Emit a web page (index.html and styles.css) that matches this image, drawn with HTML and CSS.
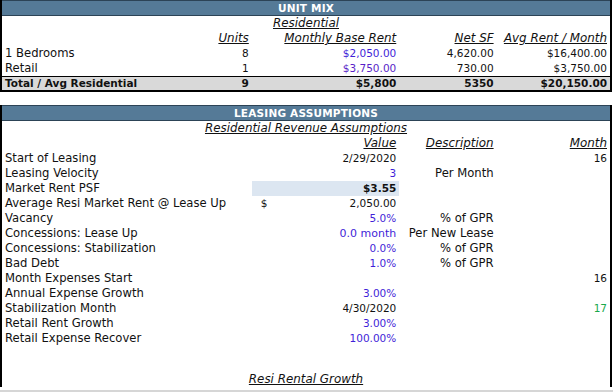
FILE: index.html
```html
<!DOCTYPE html>
<html>
<head>
<meta charset="utf-8">
<link rel="stylesheet" href="styles.css">
</head>
<body>
<div class="sheet">
  <table class="grid unit-mix">
    <colgroup>
      <col class="c-label"><col class="c-units"><col class="c-rent"><col class="c-sf"><col class="c-avg">
    </colgroup>
    <tr class="band"><td colspan="5">UNIT MIX</td></tr>
    <tr><td colspan="5" class="center"><span class="sub">Residential</span></td></tr>
    <tr>
      <td></td>
      <td class="r"><span class="sub">Units</span></td>
      <td class="r"><span class="sub">Monthly Base Rent</span></td>
      <td class="r"><span class="sub">Net SF</span></td>
      <td class="r"><span class="sub">Avg Rent / Month</span></td>
    </tr>
    <tr>
      <td>1 Bedrooms</td><td class="r num">8</td><td class="r num input">$2,050.00</td><td class="r num">4,620.00</td><td class="r num">$16,400.00</td>
    </tr>
    <tr>
      <td>Retail</td><td class="r num">1</td><td class="r num input2">$3,750.00</td><td class="r num">730.00</td><td class="r num">$3,750.00</td>
    </tr>
    <tr class="total">
      <td>Total / Avg Residential</td><td class="r">9</td><td class="r">$5,800</td><td class="r">5350</td><td class="r">$20,150.00</td>
    </tr>
  </table>

  <table class="grid leasing">
    <colgroup>
      <col class="l-label"><col class="l-value"><col class="l-desc"><col class="l-month">
    </colgroup>
    <tr class="band"><td colspan="4">LEASING ASSUMPTIONS</td></tr>
    <tr><td colspan="4" class="center"><span class="sub">Residential Revenue Assumptions</span></td></tr>
    <tr>
      <td></td>
      <td class="r"><span class="sub">Value</span></td>
      <td class="r"><span class="sub">Description</span></td>
      <td class="r"><span class="sub">Month</span></td>
    </tr>
    <tr><td>Start of Leasing</td><td class="r num">2/29/2020</td><td></td><td class="r num">16</td></tr>
    <tr><td>Leasing Velocity</td><td class="r num input">3</td><td class="r">Per Month</td><td></td></tr>
    <tr><td>Market Rent PSF</td><td class="r num hl"><b>$3.55</b></td><td></td><td></td></tr>
    <tr><td>Average Resi Market Rent @ Lease Up</td><td class="r num"><span class="sign">$</span>2,050.00</td><td></td><td></td></tr>
    <tr><td>Vacancy</td><td class="r num input">5.0%</td><td class="r">% of GPR</td><td></td></tr>
    <tr><td>Concessions: Lease Up</td><td class="r mixed input">0.0 month</td><td class="r">Per New Lease</td><td></td></tr>
    <tr><td>Concessions: Stabilization</td><td class="r num input">0.0%</td><td class="r">% of GPR</td><td></td></tr>
    <tr><td>Bad Debt</td><td class="r num input">1.0%</td><td class="r">% of GPR</td><td></td></tr>
    <tr><td>Month Expenses Start</td><td></td><td></td><td class="r num">16</td></tr>
    <tr><td>Annual Expense Growth</td><td class="r num input">3.00%</td><td></td><td></td></tr>
    <tr><td>Stabilization Month</td><td class="r num">4/30/2020</td><td></td><td class="r num green">17</td></tr>
    <tr><td>Retail Rent Growth</td><td class="r num input">3.00%</td><td></td><td></td></tr>
    <tr><td>Retail Expense Recover</td><td class="r num input">100.00%</td><td></td><td></td></tr>
    <tr class="spacer"><td colspan="4"></td></tr>
    <tr><td colspan="4" class="center"><span class="sub">Resi Rental Growth</span></td></tr>
  </table>
</div>
<div class="gridline"></div>
</body>
</html>
```

FILE: styles.css
```css
html, body {
  margin: 0;
  padding: 0;
  background: #ffffff;
}
body {
  font-family: "DejaVu Sans", "Liberation Sans", sans-serif;
  font-size: 11.6px;
  color: #111;
  width: 613px;
  height: 392px;
  overflow: hidden;
  position: relative;
}
.sheet {
  display: flex;
  flex-direction: column;
  gap: 13px;
}
.grid {
  width: 612px;
  border-collapse: collapse;
  table-layout: fixed;
  border-left: 2px solid #000;
  border-right: 2px solid #000;
}
.grid td {
  padding: 0 3px;
  height: 15px;
  line-height: 15px;
  white-space: nowrap;
  overflow: visible;
}
.c-label { width: 198px; }
.c-units { width: 52px; }
.c-rent { width: 147px; }
.c-sf { width: 97px; }
.c-avg { width: 114px; }
.l-label { width: 250px; }
.l-value { width: 147px; }
.l-desc { width: 97px; }
.l-month { width: 114px; }

.band td {
  background: #557a97;
  color: #fff;
  font-size: 10.5px;
  font-weight: bold;
  text-align: center;
  height: 14px;
  line-height: 14px;
  border-top: 1px solid #2c4356;
  border-bottom: 1px solid #2c4356;
  letter-spacing: 0.2px;
}
.center { text-align: center; }
.r { text-align: right; }
.num { font-size: 10.5px; }
.mixed { font-size: 11px; }
.sub {
  font-style: italic;
  text-decoration: underline;
  font-size: 11.9px;
}
.input { color: #3f1fd8; }
.input2 { color: #5a1fc8; }
.green { color: #19a84b; }
.total td {
  background: #d9d9d9;
  font-weight: bold;
  font-size: 10.5px;
  height: 13px;
  line-height: 13px;
  border-top: 1px solid #000;
  border-bottom: 2px solid #000;
}
.hl { background: #dce6f1; }
.sign {
  float: left;
  padding-left: 6px;
}
.spacer td { height: 26px; }
.gridline {
  position: absolute;
  left: 0;
  right: 0;
  top: 390px;
  height: 2px;
  background: #d6d6d6;
}
```
